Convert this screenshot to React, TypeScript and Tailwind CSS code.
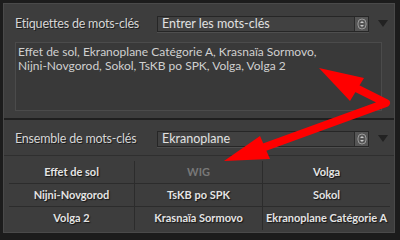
import React from "react";

const Stepper = () => (
  <div className="w-[14px] h-full bg-[#555555] border-l border-[#2a2a2a] flex items-center justify-center">
    <svg width="10" height="12" viewBox="0 0 10 12">
      <rect x="1" y="1" width="8" height="10" rx="4" fill="none" stroke="#9a9a9a" strokeWidth="1" />
      <path d="M3 5 L5 3 L7 5 Z" fill="#c8c8c8" />
      <path d="M3 7 L5 9 L7 7 Z" fill="#c8c8c8" />
    </svg>
  </div>
);

const Dropdown = ({ text }: { text: string }) => (
  <div className="w-[212px] h-[16px] bg-[#414141] border border-[#262626] flex items-stretch shadow-[0_1px_0_#4e4e4e]">
    <div className="flex-1 pl-[4px] text-[12.5px] leading-[14px] text-[#e2e2e2] whitespace-nowrap">{text}</div>
    <Stepper />
  </div>
);

const Tri = () => (
  <svg width="10" height="8" viewBox="0 0 10 8" className="ml-[9px]">
    <path d="M0 0 L10 0 L5 7 Z" fill="#222222" />
  </svg>
);

const cells = [
  ["Effet de sol", "WIG", "Volga"],
  ["Nijni-Novgorod", "TsKB po SPK", "Sokol"],
  ["Volga 2", "Krasnaïa Sormovo", "Ekranoplane Catégorie A"],
];

export default function App() {
  return (
    <div
      className="relative w-[400px] h-[240px] bg-[#1c1c1c] pt-[3px] pl-[3px] pr-[5px] pb-[7px] overflow-hidden"
      style={{ fontFamily: "Lato, 'Open Sans', sans-serif" }}
    >
      <div className="w-full h-full bg-[#3d3d3d] border border-[#4a4a4a] flex flex-col">
        {/* Section 1 */}
        <div className="h-[114px] flex flex-col">
          <div className="flex items-center mt-[12px] h-[16px]">
            <div className="w-[153px] pl-[11px] text-[12.5px] tracking-[-0.2px] whitespace-nowrap text-[#d6d6d6] [text-shadow:1px_1px_0_#1e1e1e]">
              Etiquettes de mots-clés
            </div>
            <Dropdown text="Entrer les mots-clés" />
            <Tri />
          </div>
          <div className="mt-[10px] ml-[11px] mr-[12px] h-[69px] bg-[#393939] border border-[#4b4b4b] pl-[2px] pt-[2px] text-[12px] leading-[14px] text-[#d0d0d0] whitespace-nowrap">
            <div>Effet de sol, Ekranoplane Catégorie A, Krasnaïa Sormovo,</div>
            <div>Nijni-Novgorod, Sokol, TsKB po SPK, Volga, Volga 2</div>
          </div>
        </div>
        <div className="h-[2px] bg-[#1f1f1f]" />
        {/* Section 2 */}
        <div className="flex-1 flex flex-col">
          <div className="flex items-center mt-[11px] h-[16px]">
            <div className="w-[153px] pl-[11px] text-[12.5px] tracking-[-0.2px] whitespace-nowrap text-[#d6d6d6] [text-shadow:1px_1px_0_#1e1e1e]">
              Ensemble de mots-clés
            </div>
            <Dropdown text="Ekranoplane" />
            <Tri />
          </div>
          <div className="mt-[8px] h-px bg-[#2f2f2f]" />
          <div className="mt-[5px] ml-[5px] mr-[4px] grid grid-cols-[126px_128px_1fr]">
            {cells.map((row, r) =>
              row.map((c, i) => (
                <div
                  key={r + "-" + i}
                  className={
                    "h-[23px] flex items-center justify-center text-[11px] font-bold whitespace-nowrap " +
                    (i < 2 ? "border-r border-[#2c2c2c] " : "") +
                    (r < 2 ? "border-b border-[#2c2c2c] " : "") +
                    (c === "WIG"
                      ? "text-[#787878]"
                      : "text-[#e4e4e4] [text-shadow:1px_1px_1px_#151515]")
                  }
                >
                  {c}
                </div>
              ))
            )}
          </div>
        </div>
      </div>
      <svg className="absolute inset-0 pointer-events-none" width="400" height="240" viewBox="0 0 400 240">
        <polyline
          points="354,87 386,103 265,147"
          fill="none"
          stroke="#ff0000"
          strokeWidth="8"
          strokeLinejoin="round"
          strokeLinecap="round"
        />
        <polygon points="319,68 364,78 350,101" fill="#ff0000" />
        <polygon points="224,161 260,136 270,159" fill="#ff0000" />
      </svg>
    </div>
  );
}
